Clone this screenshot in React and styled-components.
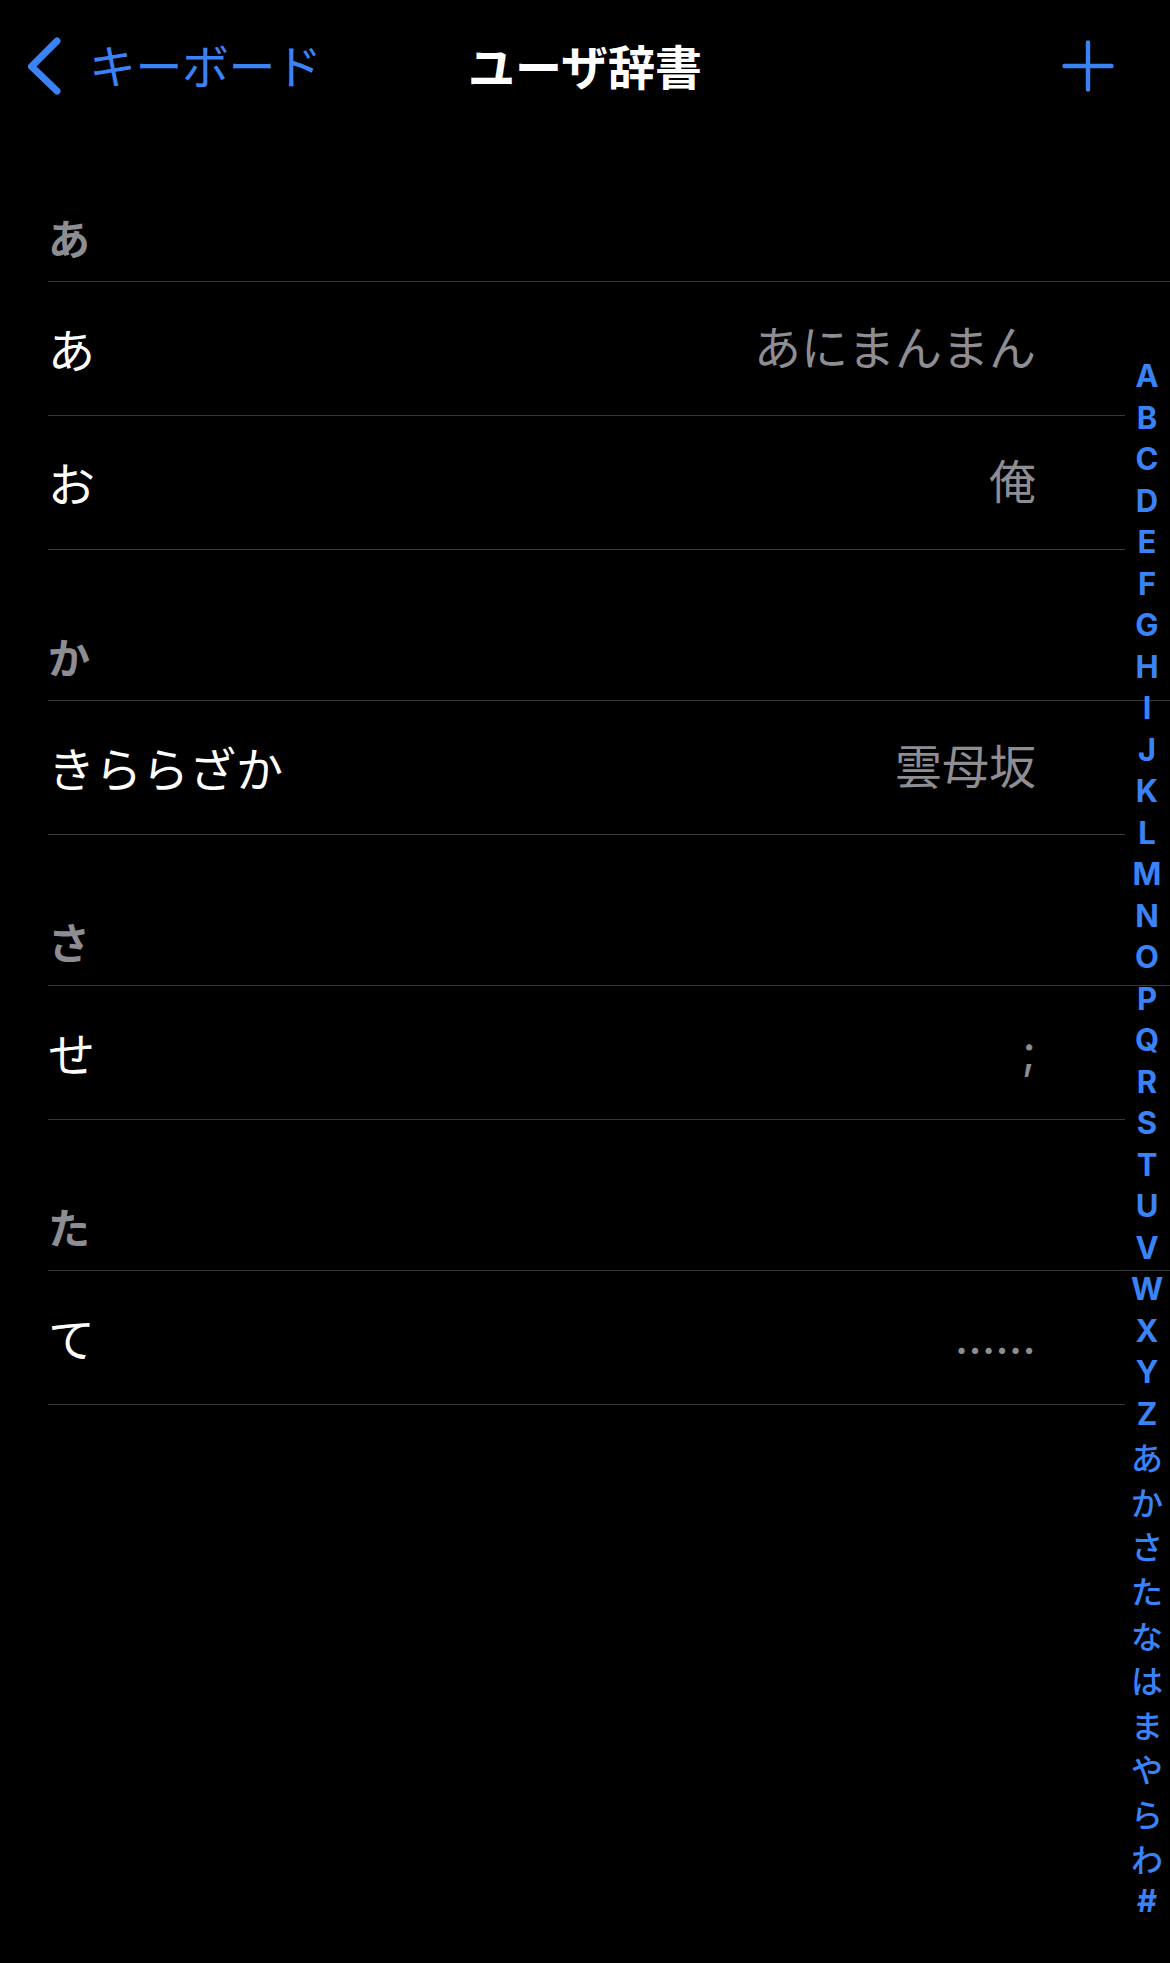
import React from "react";
import styled, { createGlobalStyle } from "styled-components";

const GlobalStyle = createGlobalStyle`
  html, body {
    margin: 0;
    padding: 0;
    background: #000;
  }
  body {
    font-family: "Noto Sans CJK JP", "Noto Sans", sans-serif;
    -webkit-font-smoothing: antialiased;
  }
`;

const BLUE = "#3a83f7";
const GRAY = "#8d8d93";
const SEP = "#38383b";

const Screen = styled.div`
  position: relative;
  width: 1170px;
  min-height: 1963px;
  background: #000;
  overflow: hidden;
`;

const NavBar = styled.header`
  height: 131px;
  display: grid;
  grid-template-columns: 1fr auto 1fr;
  align-items: center;
`;

const BackButton = styled.div`
  display: flex;
  align-items: center;
  gap: 25px;
  padding-left: 24px;
  color: ${BLUE};
  font-family: "Noto Sans CJK JP", sans-serif;
  font-size: 47px;
  line-height: 1;
  font-weight: 400;
  letter-spacing: -0.5px;
`;

const BackLabel = styled.span`
  padding-bottom: 5px;
`;

const Title = styled.h1`
  margin: 0;
  padding-bottom: 2px;
  color: #fff;
  font-family: "Noto Sans CJK JP", sans-serif;
  font-size: 47px;
  line-height: 1;
  font-weight: 700;
`;

const AddButton = styled.div`
  justify-self: end;
  padding-right: 56px;
  display: flex;
  align-items: center;
`;

const List = styled.main`
  padding-left: 48px;
`;

const SectionHeader = styled.div`
  box-sizing: border-box;
  height: 151px;
  border-bottom: 1px solid ${SEP};
  display: flex;
  align-items: flex-end;
  padding-bottom: 23px;
  color: ${GRAY};
  font-family: "Noto Sans CJK JP", sans-serif;
  font-size: 42px;
  line-height: 1;
  font-weight: 700;
`;

const Row = styled.div`
  box-sizing: border-box;
  height: 134px;
  margin-right: 45px;
  padding: 0 89px 3px 0;
  border-bottom: 1px solid ${SEP};
  display: flex;
  align-items: center;
  justify-content: space-between;
  font-size: 47px;
  line-height: 1;
`;

const Word = styled.span`
  color: #fff;
  font-family: "Noto Sans CJK JP", sans-serif;
  font-weight: 400;
`;

const Reading = styled.span`
  color: ${GRAY};
  font-family: "Inter", "Noto Sans CJK JP", sans-serif;
  font-weight: 400;
`;

const IndexBar = styled.nav`
  position: absolute;
  top: 355px;
  right: 0;
  width: 46px;
  display: flex;
  flex-direction: column;
  align-items: center;
  color: ${BLUE};
`;

const IndexItem = styled.span`
  display: flex;
  align-items: center;
  justify-content: center;
  height: ${(p) => (p.$kana ? "44.6px" : "41.5px")};
  font-family: ${(p) =>
    p.$kana ? `"Noto Sans CJK JP", sans-serif` : `"Inter", "Liberation Sans", sans-serif`};
  font-size: ${(p) => (p.$kana ? "32px" : "31px")};
  font-weight: ${(p) => (p.$kana ? 500 : 700)};
  line-height: 1;
`;

const sections = [
  { head: "あ", rows: [["あ", "あにまんまん"], ["お", "俺"]] },
  { head: "か", rows: [["きららざか", "雲母坂"]] },
  { head: "さ", rows: [["せ", ";"]] },
  { head: "た", rows: [["て", "……"]] },
];

const latin = "ABCDEFGHIJKLMNOPQRSTUVWXYZ".split("");
const kana = ["あ", "か", "さ", "た", "な", "は", "ま", "や", "ら", "わ", "#"];

const Chevron = () => (
  <svg width="40" height="64" viewBox="0 0 40 64" fill="none">
    <path
      d="M33 7 L7.5 32.5 L33 57"
      stroke={BLUE}
      strokeWidth="7"
      strokeLinecap="round"
      strokeLinejoin="round"
    />
  </svg>
);

const Plus = () => (
  <svg width="52" height="52" viewBox="0 0 52 52" fill="none">
    <path
      d="M2.5 26 H49.5 M26 2.5 V49.5"
      stroke={BLUE}
      strokeWidth="4.4"
      strokeLinecap="round"
    />
  </svg>
);

export default function App() {
  return (
    <Screen>
      <GlobalStyle />
      <NavBar>
        <BackButton>
          <Chevron />
          <BackLabel>キーボード</BackLabel>
        </BackButton>
        <Title>ユーザ辞書</Title>
        <AddButton>
          <Plus />
        </AddButton>
      </NavBar>
      <List>
        {sections.map((s) => (
          <section key={s.head}>
            <SectionHeader>{s.head}</SectionHeader>
            {s.rows.map(([w, r]) => (
              <Row key={w}>
                <Word>{w}</Word>
                <Reading>{r}</Reading>
              </Row>
            ))}
          </section>
        ))}
      </List>
      <IndexBar>
        {latin.map((c) => (
          <IndexItem key={c}>{c}</IndexItem>
        ))}
        {kana.map((c) => (
          <IndexItem key={c} $kana={c !== "#"}>
            {c}
          </IndexItem>
        ))}
      </IndexBar>
    </Screen>
  );
}
